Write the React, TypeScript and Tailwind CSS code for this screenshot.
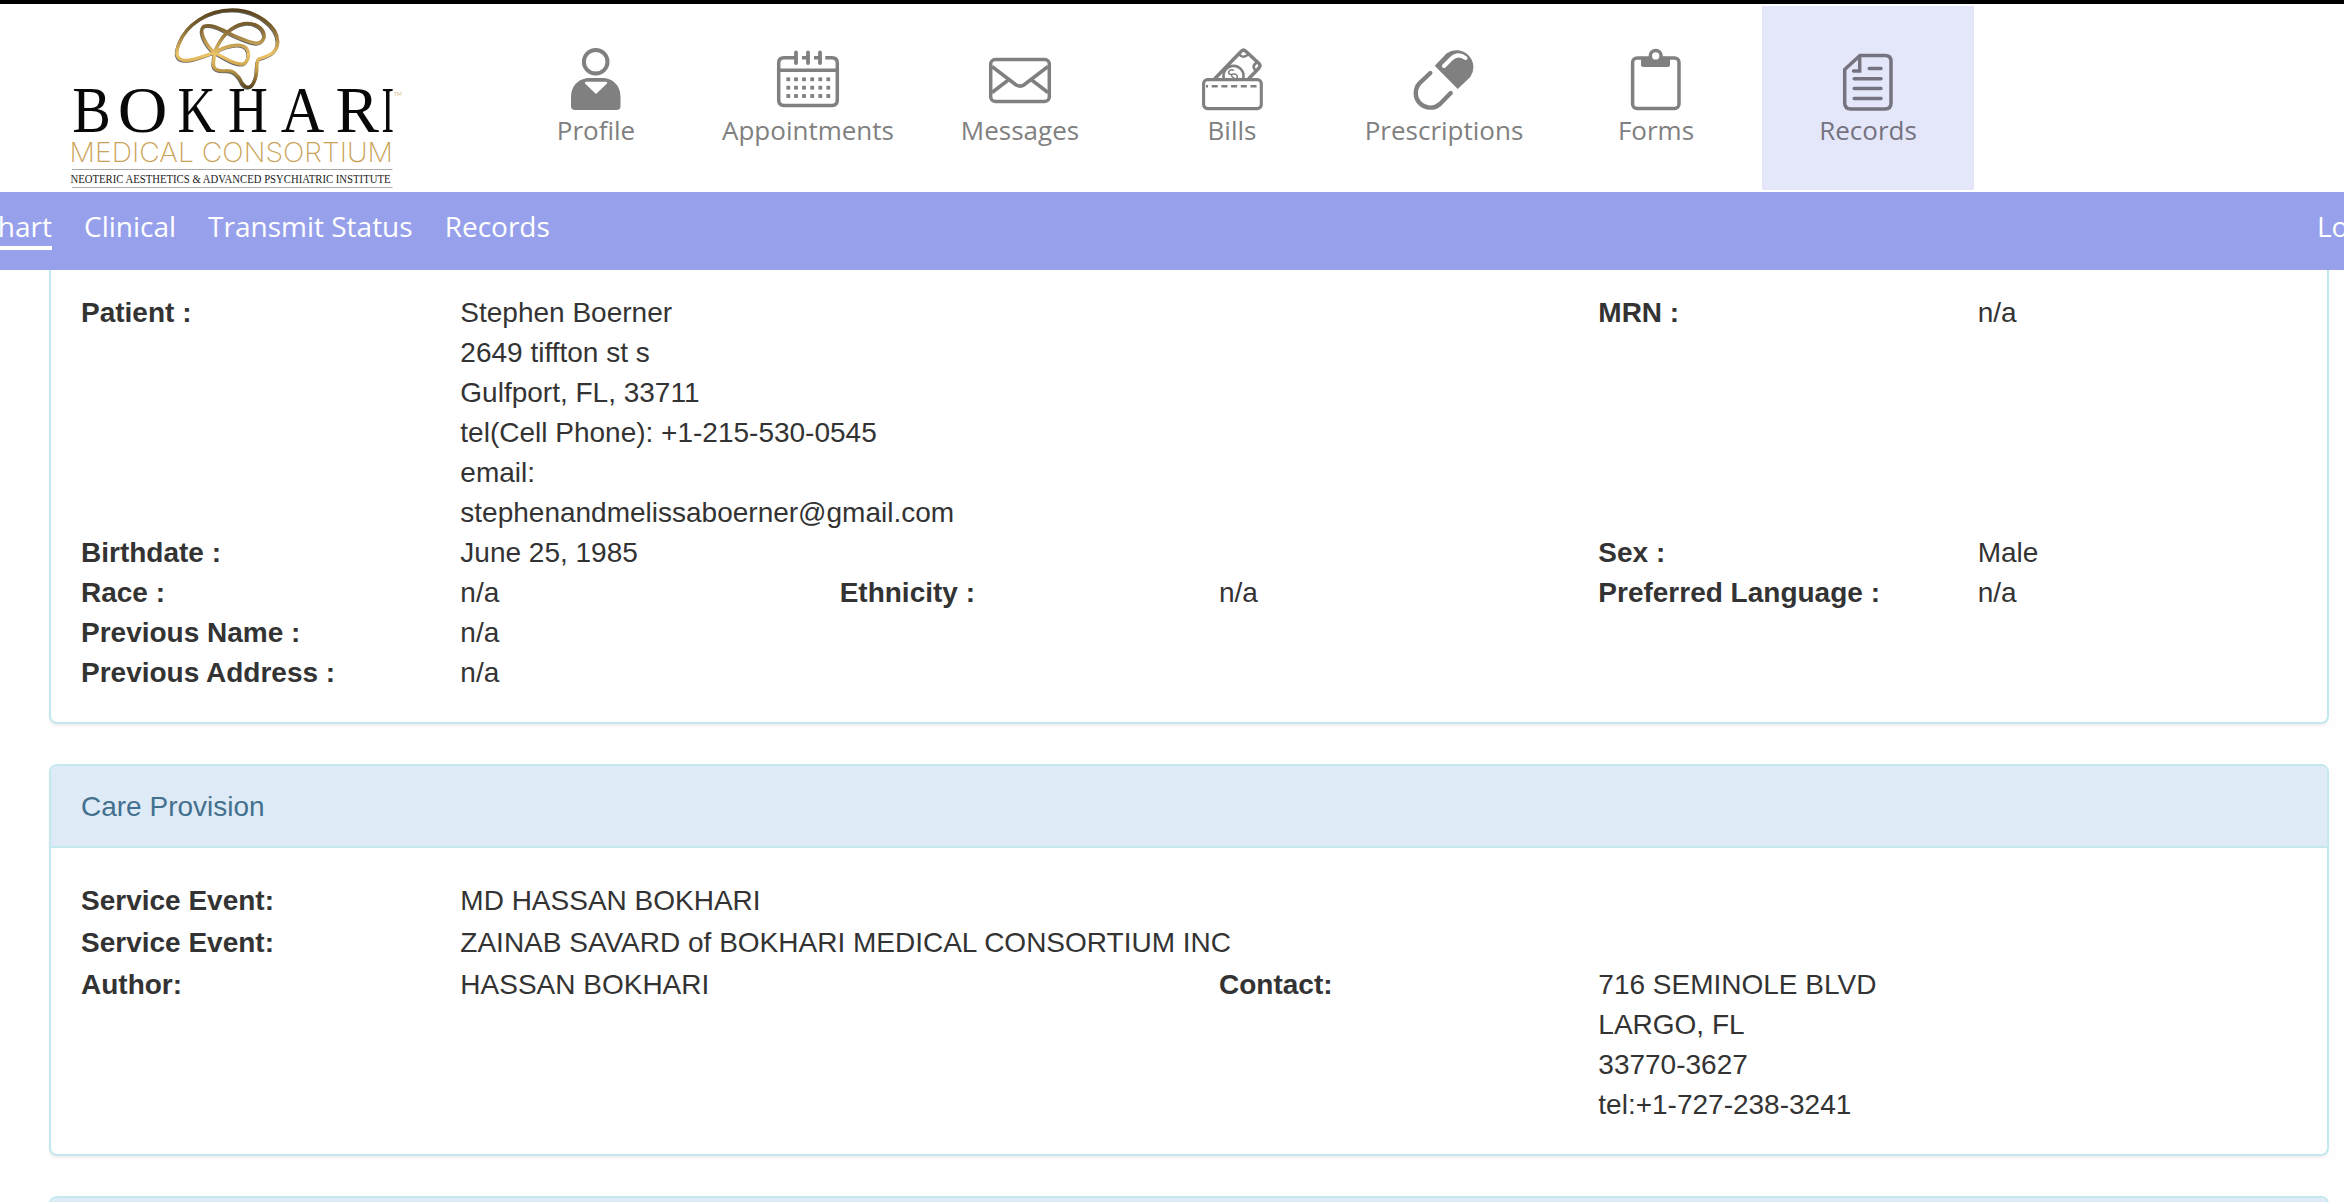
import React from "react";

function ProfileIcon() {
  return (
    <>
      <circle cx="-0.3" cy="61.7" r="11.8" strokeWidth="4" />
      <path
        d="M-25 106V97C-25 84-15 78-7 78H7C15 78 24.500 84 24.500 97V106Q24.500 110 20.500 110H-21Q-25 110-25 106Z"
        fill="currentColor"
        stroke="none"
      />
      <path d="M-10 81.700H10Q12 82 10.500 84L0 94L-10.500 84Q-12 82-10 81.700Z" fill="white" stroke="none" />
    </>
  );
}

function CalendarIcon() {
  const xs = [-19.7, -12, -4, 4.2, 12.3, 20.3];
  const ys = [79.3, 87.7, 96];
  return (
    <>
      <path d="M-13 57.700H-24Q-29.300 57.700-29.300 63V100Q-29.300 105.500-24 105.500H24Q29.300 105.500 29.300 100V63Q29.300 57.700 24 57.700H17.300M-6 57.700H0M6 57.700H12M-29 70.300H29" />
      <path d="M-12 52.500V63M0 52.500V63M12 52.500V63" strokeWidth="3.8" strokeLinecap="round" />
      {ys.map((y) =>
        xs.map((x) => (
          <rect key={`${x}-${y}`} x={x - 1.9} y={y - 1.9} width="3.8" height="3.8" fill="currentColor" stroke="none" />
        )),
      )}
    </>
  );
}

function MessagesIcon() {
  return (
    <>
      <rect x="-29.3" y="59.6" width="58.6" height="41.8" rx="4.5" />
      <path d="M-28 66.500L-4.500 84.500Q0 87.700 4.500 84.500L28 66.500M-28 92.500L-11 79.500M28 92.500L11 79.500" />
    </>
  );
}

function BillsIcon() {
  return (
    <>
      <rect x="-28.4" y="79.6" width="57.7" height="29" rx="4" strokeWidth="3.1" />
      <path d="M-26 86.300H28" strokeDasharray="6 3.7" strokeDashoffset="4" strokeWidth="2.5" />
      <path d="M-17.500 79L9.500 51Q11.500 49 13.500 51L27 63.500Q29 65.700 27 68L16.500 79" strokeWidth="3.4" />
      <path d="M6.500 54Q11.500 59.500 16.500 54M26.500 61.500Q17.500 66 25 71.500" strokeWidth="2.6" />
      <path d="M-8 79A10 10 0 1 1 11 79" strokeWidth="2.6" />
      <path d="M2 70.500C-1 68.500-4.500 71-3 73.500C-1.500 76 2 73 4 74.500C6 76 5.500 77.500 5 79M-1 75.500L3 79" strokeWidth="1.5" />
    </>
  );
}

function PrescriptionsIcon() {
  return (
    <>
      <path d="M-9.300 65.700L2.500 53.400A17 17 0 0 1 26.300 77L13.700 89Z" fill="currentColor" stroke="none" />
      <path d="M0 66L7.500 58.500Q14 52.500 21.500 58" stroke="white" strokeWidth="4" strokeLinecap="round" />
      <path d="M-13.700 73L-24.700 83.500A14.600 14.600 0 0 0-4 104L6.700 93" strokeWidth="4.400" strokeLinecap="round" />
    </>
  );
}

function FormsIcon() {
  return (
    <>
      <rect x="-23.4" y="58" width="46.4" height="50.6" rx="4.5" />
      <path d="M-15 58H14V64.500Q14 67 11.500 67H-12.500Q-15 67-15 64.500Z" fill="currentColor" stroke="none" />
      <circle cx="-0.3" cy="55.9" r="5.4" fill="white" />
    </>
  );
}

function RecordsIcon() {
  return (
    <path
      d="M-8 55.400H17Q23 55.400 23 61V103Q23 109 17 109H-17Q-23.300 109-23.300 103V69.500ZM-8.300 56V71H-14.500M1.200 68.600H13M-13.800 78.700H13M-13.800 88.600H13M-13.800 98.600H13"
      strokeLinecap="round"
      strokeWidth="3.5"
    />
  );
}

const tabs = [
  { label: "Profile", Icon: ProfileIcon },
  { label: "Appointments", Icon: CalendarIcon },
  { label: "Messages", Icon: MessagesIcon },
  { label: "Bills", Icon: BillsIcon },
  { label: "Prescriptions", Icon: PrescriptionsIcon },
  { label: "Forms", Icon: FormsIcon },
  { label: "Records", Icon: RecordsIcon, active: true },
];

function Logo() {
  return (
    <svg viewBox="40 4 380 188" className="ml-10 h-[188px] w-[380px] shrink-0">
      <defs>
        <linearGradient id="gold" gradientUnits="userSpaceOnUse" x1="0" y1="25" x2="0" y2="265">
          <stop offset="0" stopColor="#54401c" />
          <stop offset="0.25" stopColor="#826632" />
          <stop offset="0.58" stopColor="#edc468" />
          <stop offset="0.75" stopColor="#c8a04b" />
          <stop offset="1" stopColor="#54401c" />
        </linearGradient>
        <path
          id="brain"
          d="M522 158C490 167 465 180 440 181C406 182 404 160 416 130C437 75 500 30 575 30C650 30 711 80 712 125C711 162 680 168 655 177C643 192 655 215 642 242C634 265 618 268 605 250C594 225 580 211 560 212C535 214 517 210 519 190ZM522 158C490 130 475 90 490 79C520 68 560 100 600 115C640 132 662 138 671 112C673 83 640 66 610 71C565 80 540 112 522 158C550 140 600 125 618 145C632 165 620 195 600 192C570 190 550 170 522 158"
        />
      </defs>
      <g transform="translate(40.500 0) scale(.33333)" fill="none" strokeLinejoin="round">
        <use href="#brain" stroke="#666" strokeWidth="9" transform="translate(-2 3)" />
        <use href="#brain" stroke="url(#gold)" strokeWidth="10" />
      </g>
      <g fontFamily="Liberation Serif, serif" fontSize="65" fill="#080808">
        <text x="72.300" y="132" textLength="38.600" lengthAdjust="spacingAndGlyphs">B</text>
        <text x="117.700" y="132" textLength="49.700" lengthAdjust="spacingAndGlyphs">O</text>
        <text x="177.500" y="132" textLength="38.100" lengthAdjust="spacingAndGlyphs">K</text>
        <text x="228" y="132" textLength="39.900" lengthAdjust="spacingAndGlyphs">H</text>
        <text x="280.800" y="132" textLength="43.500" lengthAdjust="spacingAndGlyphs">A</text>
        <text x="335.600" y="132" textLength="43.400" lengthAdjust="spacingAndGlyphs">R</text>
        <text x="381.500" y="132" textLength="12.500" lengthAdjust="spacingAndGlyphs">I</text>
      </g>
      <text x="394" y="96" fontFamily="Lato, sans-serif" fontSize="5" fill="#d9b98a">TM</text>
      <text x="69.500" y="162" fontFamily="Inter, sans-serif" fontWeight="200" fontSize="27" fill="#c9a256" textLength="323.500" lengthAdjust="spacingAndGlyphs">MEDICAL CONSORTIUM</text>
      <path d="M72 169.500H392.500M72 187.500H392.500" stroke="#aaa" strokeWidth="1" />
      <text x="70.500" y="182.500" fontFamily="Liberation Serif, serif" fontSize="12.500" fill="#222" textLength="320" lengthAdjust="spacingAndGlyphs">NEOTERIC AESTHETICS &amp; ADVANCED PSYCHIATRIC INSTITUTE</text>
    </svg>
  );
}

function Header() {
  return (
    <header className="flex h-48 border-t-4 border-black bg-white">
      <Logo />
      <nav className="ml-[70px] flex pt-0.5 pb-0.5">
        {tabs.map(({ label, Icon, active }) => (
          <a
            key={label}
            className={`flex w-[212px] flex-col items-center pt-[38px] font-['Open_Sans',sans-serif] text-[26px] leading-9 ${
              active ? "bg-[#e4e6fa] text-[#74737f]" : "text-[#808080]"
            }`}
          >
            <svg viewBox="-34 44 68 70" className="h-[70px] w-[68px] shrink-0" fill="none" stroke="currentColor" strokeWidth="3.500">
              <Icon />
            </svg>
            <span className="mt-[-2px]">{label}</span>
          </a>
        ))}
      </nav>
    </header>
  );
}

function SubNav() {
  return (
    <nav className="flex h-[78px] items-start overflow-hidden bg-[#97a1eb] pt-[14px] font-['Open_Sans',sans-serif] text-[28px] leading-10 whitespace-nowrap text-white">
      <div className="flex w-[52px] justify-end border-b-4 border-white">
        <span className="h-10">hart</span>
      </div>
      <span className="ml-8">Clinical</span>
      <span className="ml-8">Transmit Status</span>
      <span className="ml-8">Records</span>
      <span className="ml-auto w-[27px]">Lo</span>
    </nav>
  );
}

function Term({ children, className = "" }: { children: React.ReactNode; className?: string }) {
  return <dt className={`pl-[30px] font-bold ${className}`}>{children}</dt>;
}

function Value({ children, className = "" }: { children: React.ReactNode; className?: string }) {
  return <dd className={`pl-[30px] whitespace-nowrap ${className}`}>{children}</dd>;
}

const panel = "ml-[49px] mr-[15px] border-2 border-[#c3e8f0] bg-white shadow-[0_2px_2px_rgba(0,0,0,0.06)]";

export default function App() {
  return (
    <div className="h-[1202px] w-[2344px] overflow-hidden bg-[#fefefe] font-['Liberation_Sans',Arial,sans-serif] text-[28px] leading-10 text-[#333]">
      <Header />
      <SubNav />
      <main>
        <section className={`${panel} h-[454px] rounded-b-lg border-t-0 pt-[23px]`}>
          <dl className="grid grid-cols-6 whitespace-nowrap">
            <Term>Patient :</Term>
            <Value className="col-span-3">
              <p>Stephen Boerner</p>
              <p>2649 tiffton st s</p>
              <p>Gulfport, FL, 33711</p>
              <p>tel(Cell Phone): +1-215-530-0545</p>
              <p>email:</p>
              <p>stephenandmelissaboerner@gmail.com</p>
            </Value>
            <Term>MRN :</Term>
            <Value>n/a</Value>
            <Term>Birthdate :</Term>
            <Value className="col-span-3">June 25, 1985</Value>
            <Term>Sex :</Term>
            <Value>Male</Value>
            <Term>Race :</Term>
            <Value>n/a</Value>
            <Term>Ethnicity :</Term>
            <Value>n/a</Value>
            <Term>Preferred Language :</Term>
            <Value>n/a</Value>
            <Term>Previous Name :</Term>
            <Value className="col-span-5">n/a</Value>
            <Term>Previous Address :</Term>
            <Value className="col-span-5">n/a</Value>
          </dl>
        </section>

        <section className={`${panel} mt-10 h-[392px] rounded-lg`}>
          <h2 className="h-[82px] rounded-t-md border-b-2 border-[#c3e8f0] bg-[#deebf6] pt-[21px] pl-[30px] text-[#44708f]">
            Care Provision
          </h2>
          <dl className="grid grid-cols-6 gap-y-0.5 pt-[33px]">
            <Term>Service Event:</Term>
            <Value className="col-span-5">MD HASSAN BOKHARI</Value>
            <Term>Service Event:</Term>
            <Value className="col-span-5">ZAINAB SAVARD of BOKHARI MEDICAL CONSORTIUM INC</Value>
            <Term>Author:</Term>
            <Value className="col-span-2">HASSAN BOKHARI</Value>
            <Term>Contact:</Term>
            <Value className="col-span-2">
              <p>716 SEMINOLE BLVD</p>
              <p>LARGO, FL</p>
              <p>33770-3627</p>
              <p>tel:+1-727-238-3241</p>
            </Value>
          </dl>
        </section>

        <section className={`${panel} mt-10 h-20 rounded-lg`}>
          <div className="h-full rounded-t-md bg-[#deebf6]" />
        </section>
      </main>
    </div>
  );
}
